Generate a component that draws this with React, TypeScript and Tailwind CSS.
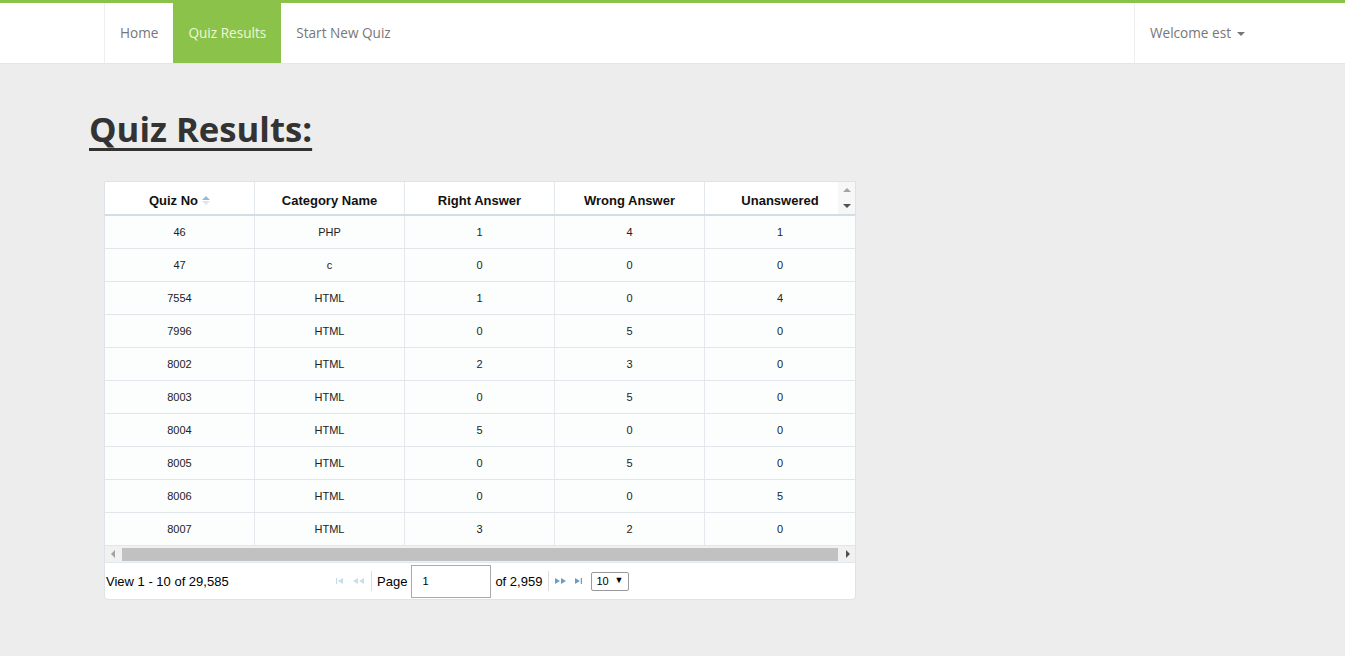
import React from "react";

const rows = [
  ["46", "PHP", "1", "4", "1"],
  ["47", "c", "0", "0", "0"],
  ["7554", "HTML", "1", "0", "4"],
  ["7996", "HTML", "0", "5", "0"],
  ["8002", "HTML", "2", "3", "0"],
  ["8003", "HTML", "0", "5", "0"],
  ["8004", "HTML", "5", "0", "0"],
  ["8005", "HTML", "0", "5", "0"],
  ["8006", "HTML", "0", "0", "5"],
  ["8007", "HTML", "3", "2", "0"],
];

const headers = ["Quiz No", "Category Name", "Right Answer", "Wrong Answer", "Unanswered"];

const NavBar = () => (
  <div className="border-t-[3px] border-[#8bc34a] bg-white">
    <div className="flex h-[61px] border-b border-[#e5e5e5] pl-[104px] pr-[85px] font-['Open_Sans',sans-serif] text-[13.6px] text-[#777]">
      <div className="flex border-l border-[#eee]">
        <div className="flex items-center px-[15px]">Home</div>
        <div className="flex items-center bg-[#8bc34a] px-[15px] text-[#eef7d9]">Quiz Results</div>
        <div className="flex items-center px-[15px]">Start New Quiz</div>
      </div>
      <div className="ml-auto flex items-center border-l border-[#eee] pl-[15px] pr-[15px]">
        Welcome est
        <span className="ml-[6px] mt-[1px] h-0 w-0 border-x-[4px] border-t-[4px] border-x-transparent border-t-[#777]" />
      </div>
    </div>
  </div>
);

const PagerIcon = ({ kind, color }: { kind: "first" | "prev" | "next" | "last"; color: string }) => {
  if (kind === "first")
    return (
      <svg width="7" height="6" viewBox="0 0 7 6" fill={color}>
        <rect x="0" y="0" width="1.2" height="6" />
        <path d="M7 0 L2 3 L7 6 Z" />
      </svg>
    );
  if (kind === "prev")
    return (
      <svg width="11" height="6" viewBox="0 0 11 6" fill={color}>
        <path d="M5 0 L0 3 L5 6 Z" />
        <path d="M11 0 L6 3 L11 6 Z" />
      </svg>
    );
  if (kind === "next")
    return (
      <svg width="11" height="6" viewBox="0 0 11 6" fill={color}>
        <path d="M0 0 L5 3 L0 6 Z" />
        <path d="M6 0 L11 3 L6 6 Z" />
      </svg>
    );
  return (
    <svg width="7" height="6" viewBox="0 0 7 6" fill={color}>
      <path d="M0 0 L5 3 L0 6 Z" />
      <rect x="5.8" y="0" width="1.2" height="6" />
    </svg>
  );
};

const Pager = () => (
  <div className="flex h-[36px] items-center font-['Liberation_Sans',Arial,sans-serif] text-[13px] text-black">
    <div className="w-[231px] pl-px pt-[2px]">View 1 - 10 of 29,585</div>
    <div className="flex items-center">
      <PagerIcon kind="first" color="#c8dcea" />
      <span className="ml-[10px] flex">
        <PagerIcon kind="prev" color="#c8dcea" />
      </span>
      <span className="ml-[7px] h-[20px] w-px bg-[#ddd]" />
      <span className="ml-[5px] pt-[1px]">Page</span>
      <div className="ml-[4px] flex h-[33px] w-[80px] items-center border border-[#aaa] bg-white pl-[10px] text-[11px]">1</div>
      <span className="ml-[4px] pt-[1px]">of 2,959</span>
      <span className="ml-[6px] h-[20px] w-px bg-[#ddd]" />
      <span className="ml-[6px] flex">
        <PagerIcon kind="next" color="#6f9dbe" />
      </span>
      <span className="ml-[9px] flex">
        <PagerIcon kind="last" color="#6f9dbe" />
      </span>
      <div className="ml-[9px] flex h-[19px] w-[38px] items-center justify-between rounded-[2px] border border-[#999] bg-white pl-[4px] pr-[5px] text-[11px]">
        <span>10</span>
        <span className="text-[9px]">▼</span>
      </div>
    </div>
  </div>
);

const ResultsTable = () => (
  <div className="ml-[104px] w-[752px] overflow-hidden rounded-b-[4px] border border-[#dde3e8] bg-white">
    <div className="relative flex h-[34px] border-b-2 border-[#d3dde6] font-['Liberation_Sans',Arial,sans-serif] text-[13px] font-bold text-[#111]">
      {headers.map((h, i) => (
        <div
          key={h}
          className={`flex w-[150px] items-center justify-center pt-[5px] ${i < 4 ? "border-r border-[#e3e8ec]" : ""}`}
        >
          {h}
          {i === 0 && (
            <span className="ml-[4px] flex flex-col gap-[1px]">
              <span className="h-0 w-0 border-x-[4px] border-b-[4px] border-x-transparent border-b-[#9ab9d6]" />
              <span className="h-0 w-0 border-x-[4px] border-t-[4px] border-x-transparent border-t-[#dde6ee]" />
            </span>
          )}
        </div>
      ))}
      <div className="absolute right-0 top-0 flex h-[32px] w-[17px] flex-col items-center justify-between bg-[#f7f7f7] py-[6px]">
        <span className="h-0 w-0 border-x-[4px] border-b-[4px] border-x-transparent border-b-[#a3a3a3]" />
        <span className="h-0 w-0 border-x-[4px] border-t-[4px] border-x-transparent border-t-[#505050]" />
      </div>
    </div>
    {rows.map((r) => (
      <div
        key={r[0]}
        className="flex h-[33px] border-b border-[#e1e6ea] bg-[#fcfdfd] font-['Liberation_Sans',Arial,sans-serif] text-[11px] text-[#222]"
      >
        {r.map((c, i) => (
          <div
            key={i}
            className={`flex w-[150px] items-center justify-center ${i < 4 ? "border-r border-[#e3e8ec]" : ""}`}
          >
            {c}
          </div>
        ))}
      </div>
    ))}
    <div className="flex h-[17px] items-center border-b border-[#e3e8ec] bg-[#f1f1f1]">
      <span className="ml-[6px] h-0 w-0 border-y-[4px] border-r-[4px] border-y-transparent border-r-[#a3a3a3]" />
      <div className="ml-[7px] h-[13px] w-[716px] bg-[#c1c1c1]" />
      <span className="ml-[8px] h-0 w-0 border-y-[4px] border-l-[4px] border-y-transparent border-l-[#505050]" />
    </div>
    <Pager />
  </div>
);

export default function App() {
  return (
    <div className="min-h-[656px] bg-[#ededed]">
      <NavBar />
      <h1 className="ml-[89px] mt-[43px] font-['Open_Sans',sans-serif] text-[34.7px] font-bold leading-[44px] text-[#333] underline decoration-[3px] underline-offset-[6px]">
        Quiz Results:
      </h1>
      <div className="mt-[30px]">
        <ResultsTable />
      </div>
    </div>
  );
}
